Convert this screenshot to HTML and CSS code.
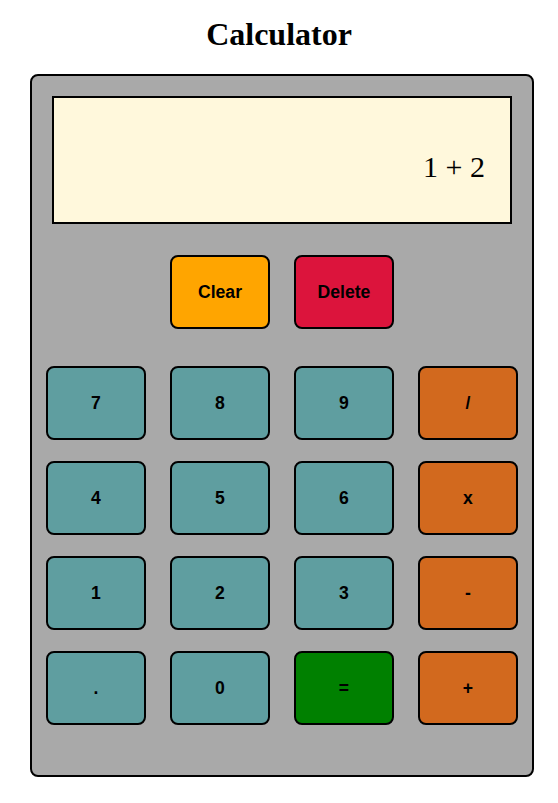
FILE: index.html
```html
<!DOCTYPE html>
<html>
<head>
<meta charset="utf-8">
<title>Calculator</title>
<link rel="stylesheet" href="styles.css">
</head>
<body>
<h1 class="title">Calculator</h1>
<div class="calculator">
  <div class="display">1 + 2</div>
  <div class="controls">
    <button class="btn btn-clear">Clear</button>
    <button class="btn btn-delete">Delete</button>
  </div>
  <div class="keys">
    <button class="btn num">7</button>
    <button class="btn num">8</button>
    <button class="btn num">9</button>
    <button class="btn op">/</button>
    <button class="btn num">4</button>
    <button class="btn num">5</button>
    <button class="btn num">6</button>
    <button class="btn op">x</button>
    <button class="btn num">1</button>
    <button class="btn num">2</button>
    <button class="btn num">3</button>
    <button class="btn op">-</button>
    <button class="btn num">.</button>
    <button class="btn num">0</button>
    <button class="btn equals">=</button>
    <button class="btn op">+</button>
  </div>
</div>
</body>
</html>
```

FILE: styles.css
```css
html, body {
  margin: 0;
  padding: 0;
  background: #ffffff;
}

body {
  font-family: "Liberation Serif", "Times New Roman", serif;
}

.title {
  margin: 0;
  padding-top: 17px;
  height: 74px;
  box-sizing: border-box;
  text-align: center;
  font-size: 32px;
  font-weight: bold;
  line-height: 35px;
  color: #000;
}

.calculator {
  box-sizing: border-box;
  width: 504px;
  height: 703px;
  margin-left: 30px;
  background: #a9a9a9;
  border: 2px solid #000;
  border-radius: 8px;
  padding-top: 20px;
}

.display {
  box-sizing: border-box;
  width: 460px;
  height: 128px;
  margin-left: 20px;
  background: #fff8dc;
  border: 2px solid #000;
  padding: 52px 25px 0 0;
  text-align: right;
  font-family: "Liberation Serif", "Times New Roman", serif;
  font-size: 30px;
  line-height: 33px;
  color: #000;
}

.controls {
  display: grid;
  grid-template-columns: repeat(2, 100px);
  column-gap: 24px;
  margin-top: 31px;
  margin-left: 138px;
}

.keys {
  display: grid;
  grid-template-columns: repeat(4, 100px);
  column-gap: 24px;
  row-gap: 21px;
  margin-top: 37px;
  margin-left: 14px;
}

.btn {
  box-sizing: border-box;
  width: 100px;
  height: 74px;
  border: 2px solid #000;
  border-radius: 8px;
  font-family: "Liberation Sans", Arial, sans-serif;
  font-weight: bold;
  font-size: 17.6px;
  color: #000;
  padding: 0;
  margin: 0;
}

.btn-clear { background: #ffa500; }
.btn-delete { background: #dc143c; }
.num { background: #5f9ea0; }
.op { background: #d2691e; }
.equals { background: #008000; }
```
